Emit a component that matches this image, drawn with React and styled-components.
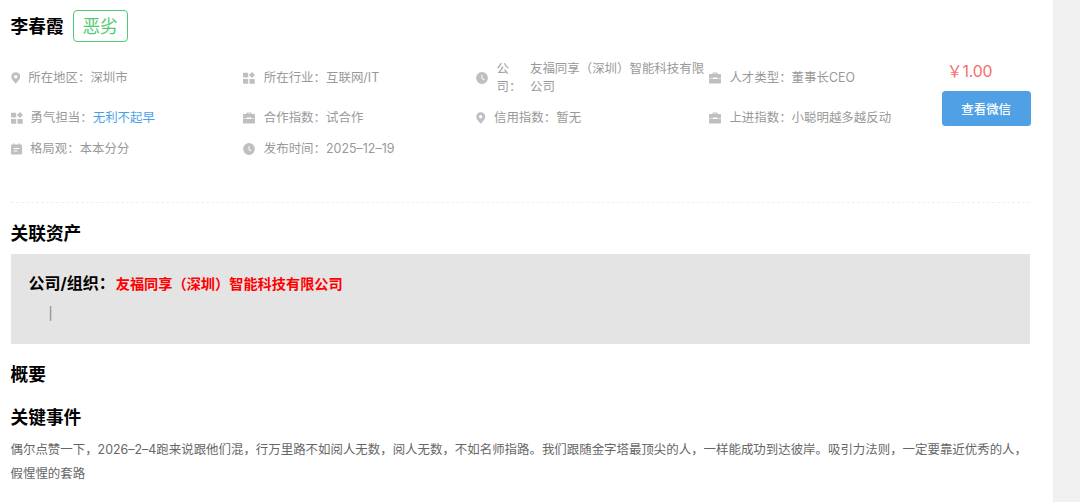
import React from "react";
import styled, { createGlobalStyle } from "styled-components";

const GlobalStyle = createGlobalStyle`
    * {
        box-sizing: border-box;
    }
    body {
        margin: 0;
        background-color: #f0f0f0;
        font-family: Inter, "Noto Sans CJK SC", sans-serif;
        font-size: 12.44px;
        color: #999;
    }
    h1, h2, h3, p {
        margin: 0;
    }
`
const Page = styled.main`
    width: 1053px;
    height: 502px;
    padding: 10px 22.6px 0 10.5px;
    background-color: #fff;
    overflow: hidden;
`
const Header = styled.header`
    display: flex;
    align-items: center;
    height: 32px;
`
const Name = styled.h1`
    padding-top: 1px;
    font-size: 17.7px;
    line-height: 32px;
    color: #000;
`
const Badge = styled.span`
    margin-left: 9px;
    width: 55px;
    height: 32px;
    border: 1px solid #52ca73;
    border-radius: 4px;
    line-height: 31px;
    text-align: center;
    font-size: 17.7px;
    color: #52ca73;
`
const Profile = styled.section`
    display: flex;
    height: 160.5px;
    padding-top: 18px;
    border-bottom: 1px dashed #f0f0f0;
`
const InfoGrid = styled.div`
    display: grid;
    grid-template-columns: repeat(4, 232.8px);
    align-content: start;
    row-gap: 13.2px;
`
const InfoItem = styled.div`
    display: flex;
    align-items: center;
    line-height: 17.8px;
`
const IconBox = styled.span`
    display: flex;
    flex-shrink: 0;
    width: ${props => props.$space}px;

    svg {
        display: block;
        fill: #bfbfbf;
    }
`
const Label = styled.span`
    width: ${props => props.$narrow ? "33.4px" : "auto"};
    flex-shrink: 0;
`
const Value = styled.span`
    color: ${props => props.$link ? "#4a9fe8" : "inherit"};
`
const Purchase = styled.div`
    width: 89px;
`
const Price = styled.p`
    height: 31px;
    padding-left: 5px;
    font-size: 15.8px;
    line-height: 23px;
    letter-spacing: -0.1px;
    color: #f56c6c;
`
const WechatButton = styled.button`
    display: block;
    width: 89px;
    height: 35px;
    padding: 0;
    border: 0;
    border-radius: 3.5px;
    background-color: #50a0e6;
    font-family: inherit;
    font-size: 12.44px;
    font-weight: 500;
    color: #fff;
`
const SectionTitle = styled.h2`
    height: ${props => props.$height}px;
    font-size: 17.7px;
    line-height: 27px;
    color: #000;
`
const Assets = styled.section`
    padding-top: 17.5px;
`
const AssetPanel = styled.div`
    height: 90px;
    padding: 17px 18px 0;
    background-color: #e4e4e4;
`
const AssetRow = styled.div`
    display: flex;
    align-items: center;
    height: 24px;
    font-weight: 700;
`
const AssetLabel = styled.h3`
    padding-bottom: 2px;
    font-size: 16px;
    color: #000;
`
const Company = styled.span`
    margin-left: 1px;
    font-size: 14.2px;
    color: #f00;
`
const AssetNote = styled.p`
    padding-left: 20px;
    line-height: 38px;
    color: #808080;
`
const Summary = styled.section`
    padding-top: 17px;
`
const Story = styled.p`
    padding-top: 0.6px;
    line-height: 23.6px;
    color: #666;
`

// icon drawing, drawn at half the size of its box
const icons = {
    pin: {
        width: 9.5,
        height: 12,
        box: "0 0 19 24",
        path: "M9.500 .5C4.500 .5.500 4.500.500 9.300c0 5.700 5.700 10 9 14.200 3.300-4.200 9-8.500 9-14.200C18.500 4.500 14.500.500 9.500.500zm0 5.500a3.400 3.400 0 1 1 0 6.800 3.400 3.400 0 0 1 0-6.800z",
    },
    grid: {
        width: 12,
        height: 12,
        box: "0 0 24 24",
        path: "M1.500 1.500H9a1.500 1.500 0 0 1 1.500 1.500v8h-9A1.500 1.500 0 0 1 0 9.500V3a1.500 1.500 0 0 1 1.500-1.500zM18 0l6 6-6 6-6-6zM0 14h10.500v9.500h-9A1.500 1.500 0 0 1 0 22zM13 14h9a1.500 1.500 0 0 1 1.500 1.500V22a1.500 1.500 0 0 1-1.500 1.500h-9z",
    },
    clock: {
        width: 12,
        height: 12,
        box: "0 0 24 24",
        path: "M12 .2a11.800 11.800 0 1 1 0 23.600A11.800 11.800 0 0 1 12 .2zM11 6v7.200l4.800 4 1.300-1.500-4.200-3.500V6z",
    },
    bag: {
        width: 12,
        height: 12,
        box: "0 0 24 24",
        path: "M7 4V2.500A1.500 1.500 0 0 1 8.500 1h7A1.500 1.500 0 0 1 17 2.500V4h5.500A1.500 1.500 0 0 1 24 5.500V12h-7.500v-1h-9v1H0V5.500A1.500 1.500 0 0 1 1.500 4zM9.500 4h5V3h-5zM0 13h7.500v1h9v-1H24v8.500a1.500 1.500 0 0 1-1.500 1.500h-21A1.500 1.500 0 0 1 0 21.500z",
    },
    note: {
        width: 11,
        height: 12,
        box: "0 0 22 24",
        path: "M2 3h2V1h3v2h8V1h3v2h2a2 2 0 0 1 2 2v16a2 2 0 0 1-2 2H2a2 2 0 0 1-2-2V5a2 2 0 0 1 2-2zm3 7v2h12v-2zm0 5v2h8v-2z",
    },
}

function Icon({ name }) {
    const icon = icons[name]
    return (
        <svg width={icon.width} height={icon.height} viewBox={icon.box} aria-hidden="true">
            <path fillRule="evenodd" d={icon.path} />
        </svg>
    )
}

const details = [
    { icon: "pin", space: 17.7, label: "所在地区", value: "深圳市" },
    { icon: "grid", space: 20.5, label: "所在行业", value: "互联网/IT" },
    { icon: "clock", space: 20.5, label: "公司", value: "友福同享（深圳）智能科技有限公司", narrow: true },
    { icon: "bag", space: 20.5, label: "人才类型", value: "董事长CEO" },
    { icon: "grid", space: 20, label: "勇气担当", value: "无利不起早", link: true },
    { icon: "bag", space: 20.5, label: "合作指数", value: "试合作" },
    { icon: "pin", space: 17.9, label: "信用指数", value: "暂无" },
    { icon: "bag", space: 20.5, label: "上进指数", value: "小聪明越多越反动" },
    { icon: "note", space: 19.4, label: "格局观", value: "本本分分" },
    { icon: "clock", space: 20.5, label: "发布时间", value: "2025–12–19" },
]

export default function App() {
    return (
        <Page lang="zh-CN">
            <GlobalStyle />
            <Header>
                <Name>李春霞</Name>
                <Badge>恶劣</Badge>
            </Header>
            <Profile>
                <InfoGrid>
                    {details.map(item => (
                        <InfoItem key={item.label}>
                            <IconBox $space={item.space}>
                                <Icon name={item.icon} />
                            </IconBox>
                            <Label $narrow={item.narrow}>{item.label}：</Label>
                            <Value $link={item.link}>{item.value}</Value>
                        </InfoItem>
                    ))}
                </InfoGrid>
                <Purchase>
                    <Price>￥1.00</Price>
                    <WechatButton>查看微信</WechatButton>
                </Purchase>
            </Profile>
            <Assets>
                <SectionTitle $height={34}>关联资产</SectionTitle>
                <AssetPanel>
                    <AssetRow>
                        <AssetLabel>公司/组织：</AssetLabel>
                        <Company>友福同享（深圳）智能科技有限公司</Company>
                    </AssetRow>
                    <AssetNote>|</AssetNote>
                </AssetPanel>
            </Assets>
            <Summary>
                <SectionTitle $height={42.5}>概要</SectionTitle>
                <SectionTitle $height={34}>关键事件</SectionTitle>
                <Story>
                    偶尔点赞一下，2026–2–4跑来说跟他们混，行万里路不如阅人无数，阅人无数，不如名师指路。我们跟随金字塔最顶尖的人，一样能成功到达彼岸。吸引力法则，一定要靠近优秀的人，假惺惺的套路
                </Story>
            </Summary>
        </Page>
    )
}
